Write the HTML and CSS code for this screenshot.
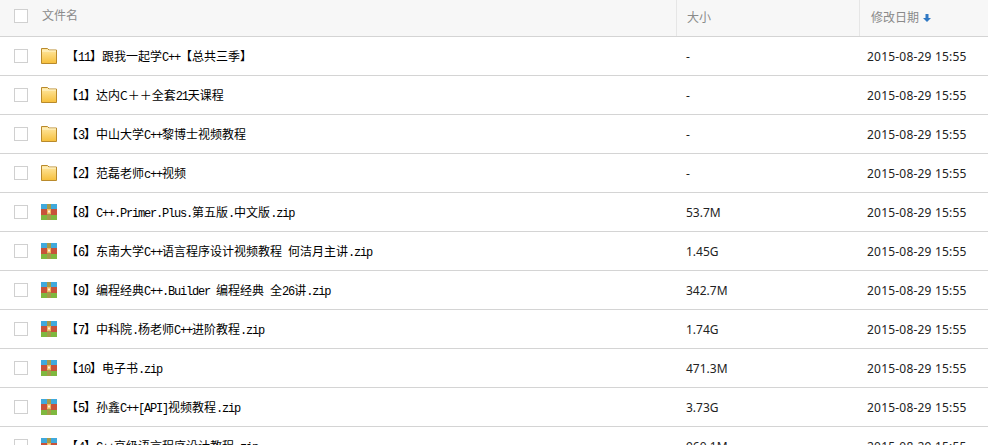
FILE: index.html
```html
<!DOCTYPE html>
<html>
<head>
  <title>文件列表</title>
  <link rel="stylesheet" href="styles.css">
</head>
<body>
  <svg class="defs" width="0" height="0">
    <linearGradient id="folder-fill" x1="0" y1="0" x2="0" y2="1">
      <stop offset="0" stop-color="#ffe9a6"/>
      <stop offset="1" stop-color="#f6bf3a"/>
    </linearGradient>
    <symbol id="folder" viewBox="0 0 16 16">
      <path d="M.5 15.500V.5h6l1.500 1.500h7.500v13.500z" fill="url(#folder-fill)" stroke="#b98a2c"/>
      <path d="M1 2.500h14v1H1z" fill="#fff6d2"/>
    </symbol>
    <symbol id="zip" viewBox="0 0 16 16">
      <path d="M0 0h16v5H0z" fill="#3fa9dc"/>
      <path d="M0 5h16v6H0z" fill="#c8523a"/>
      <path d="M0 11h16v5H0z" fill="#7fb83f"/>
      <path d="M6 0h4v16H6z" fill="#a69a4a"/>
      <path d="M6 5h4v5H6z" fill="#f0b860"/>
      <path d="M7 6.500h2v2H7z" fill="#fff3d8"/>
    </symbol>
  </svg>

  <div class="list">
    <div class="row head">
      <div class="col-name"><span class="check"></span><span class="head-label">文件名</span></div>
      <div class="col-size"><span class="head-text">大小</span></div>
      <div class="col-date"><span class="head-text">修改日期</span><span class="sort">
        <svg width="8" height="8" viewBox="0 0 8 8"><path d="M2.500 0h3v4H8L4 8 0 4h2.500z" fill="#2f78c4"/></svg>
      </span></div>
    </div>

    <div class="row">
      <div class="col-name"><span class="check"></span><svg class="icon"><use href="#folder"/></svg><span class="name">【<b>11</b>】跟我一起学<b>C++</b>【总共三季】</span></div>
      <div class="col-size">-</div>
      <div class="col-date">2015-08-29 15:55</div>
    </div>
    <div class="row">
      <div class="col-name"><span class="check"></span><svg class="icon"><use href="#folder"/></svg><span class="name">【<b>1</b>】达内C＋＋全套<b>21</b>天课程</span></div>
      <div class="col-size">-</div>
      <div class="col-date">2015-08-29 15:55</div>
    </div>
    <div class="row">
      <div class="col-name"><span class="check"></span><svg class="icon"><use href="#folder"/></svg><span class="name">【<b>3</b>】中山大学<b>C++</b>黎博士视频教程</span></div>
      <div class="col-size">-</div>
      <div class="col-date">2015-08-29 15:55</div>
    </div>
    <div class="row">
      <div class="col-name"><span class="check"></span><svg class="icon"><use href="#folder"/></svg><span class="name">【<b>2</b>】范磊老师<b>c++</b>视频</span></div>
      <div class="col-size">-</div>
      <div class="col-date">2015-08-29 15:55</div>
    </div>
    <div class="row">
      <div class="col-name"><span class="check"></span><svg class="icon"><use href="#zip"/></svg><span class="name">【<b>8</b>】<b>C++.Primer.Plus.</b>第五版<b>.</b>中文版<b>.zip</b></span></div>
      <div class="col-size">53.7M</div>
      <div class="col-date">2015-08-29 15:55</div>
    </div>
    <div class="row">
      <div class="col-name"><span class="check"></span><svg class="icon"><use href="#zip"/></svg><span class="name">【<b>6</b>】东南大学<b>C++</b>语言程序设计视频教程<b> </b>何洁月主讲<b>.zip</b></span></div>
      <div class="col-size">1.45G</div>
      <div class="col-date">2015-08-29 15:55</div>
    </div>
    <div class="row">
      <div class="col-name"><span class="check"></span><svg class="icon"><use href="#zip"/></svg><span class="name">【<b>9</b>】编程经典<b>C++.Builder </b>编程经典<b> </b>全<b>26</b>讲<b>.zip</b></span></div>
      <div class="col-size">342.7M</div>
      <div class="col-date">2015-08-29 15:55</div>
    </div>
    <div class="row">
      <div class="col-name"><span class="check"></span><svg class="icon"><use href="#zip"/></svg><span class="name">【<b>7</b>】中科院<b>.</b>杨老师<b>C++</b>进阶教程<b>.zip</b></span></div>
      <div class="col-size">1.74G</div>
      <div class="col-date">2015-08-29 15:55</div>
    </div>
    <div class="row">
      <div class="col-name"><span class="check"></span><svg class="icon"><use href="#zip"/></svg><span class="name">【<b>10</b>】电子书<b>.zip</b></span></div>
      <div class="col-size">471.3M</div>
      <div class="col-date">2015-08-29 15:55</div>
    </div>
    <div class="row">
      <div class="col-name"><span class="check"></span><svg class="icon"><use href="#zip"/></svg><span class="name">【<b>5</b>】孙鑫<b>C++[API]</b>视频教程<b>.zip</b></span></div>
      <div class="col-size">3.73G</div>
      <div class="col-date">2015-08-29 15:55</div>
    </div>
    <div class="row">
      <div class="col-name"><span class="check"></span><svg class="icon"><use href="#zip"/></svg><span class="name">【<b>4</b>】<b>C++</b>高级语言程序设计教程<b>.zip</b></span></div>
      <div class="col-size">960.1M</div>
      <div class="col-date">2015-08-29 15:55</div>
    </div>
  </div>
</body>
</html>
```

FILE: styles.css
```css
html, body {
  margin: 0;
  padding: 0;
  height: 100%;
  overflow: hidden;
  background-color: #fff;
}
body {
  font-family: "Noto Sans", "Noto Sans CJK SC", sans-serif;
  font-size: 12px;
  color: #222;
}
.defs {
  position: absolute;
}
.row {
  display: flex;
  height: 38px;
  border-bottom: 1px solid #d4d4d4;
  align-items: center;
}
.row.head {
  height: 36px;
  background-color: #f7f7f7;
  color: #8a8a8a;
  font-family: "Noto Sans CJK SC", sans-serif;
}
.col-name {
  display: flex;
  align-items: center;
  width: 676px;
  flex: none;
  padding-left: 14px;
  box-sizing: border-box;
}
.col-size {
  width: 183px;
  flex: none;
  padding-left: 10px;
  box-sizing: border-box;
}
.col-date {
  flex: 1;
  padding-left: 8px;
  letter-spacing: .2px;
}
.head .col-name, .head .col-size, .head .col-date {
  height: 100%;
  display: flex;
  align-items: center;
}
.head .col-size, .head .col-date {
  border-left: 1px solid #e6e6e6;
  letter-spacing: 0;
}
.head .col-size {
  padding-left: 10px;
}
.head .col-date {
  padding-left: 11px;
}
.head .col-name {
  align-items: flex-start;
  padding-top: 9px;
  box-sizing: border-box;
}
.head-label {
  margin-left: 14px;
  margin-top: -3px;
}
.head-text {
  padding-bottom: 3px;
}
.sort {
  display: inline-flex;
  margin-left: 4px;
}
.check {
  width: 12px;
  height: 12px;
  border: 1px solid #d0d0d0;
  background-color: #fff;
  flex: none;
}
.icon {
  width: 16px;
  height: 16px;
  margin-left: 13px;
  flex: none;
}
.name {
  margin-left: 9px;
  font-family: "Noto Sans CJK SC", sans-serif;
  color: #000;
  white-space: pre;
}
.name b {
  font-family: "Liberation Mono", monospace;
  font-weight: normal;
  letter-spacing: -1.2px;
}
```
